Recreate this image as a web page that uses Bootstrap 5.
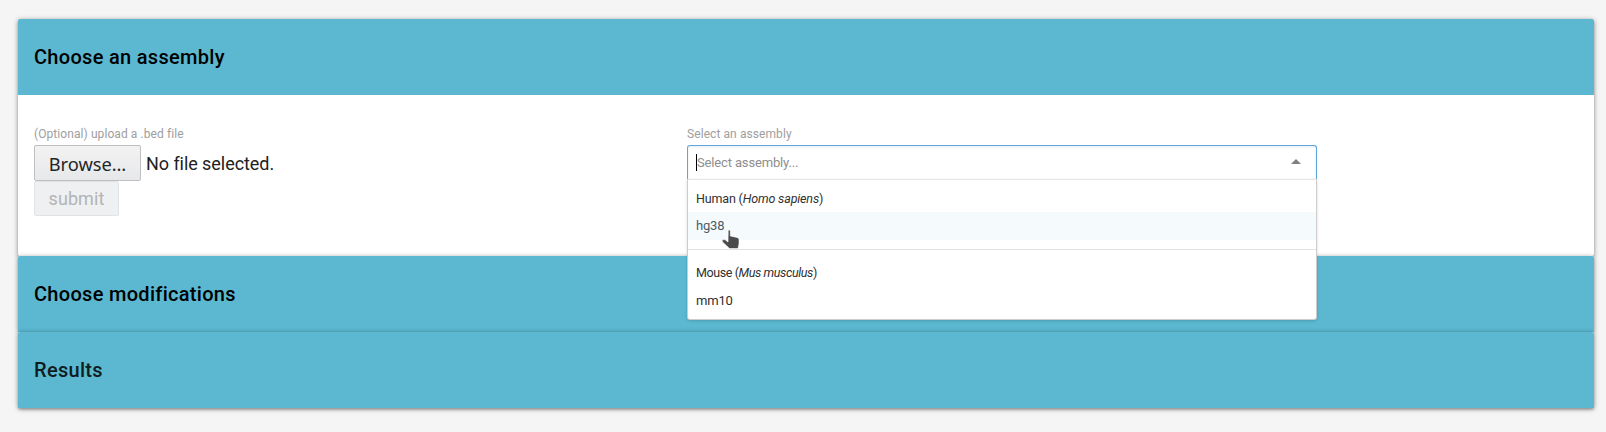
<!DOCTYPE html>
<html lang="en">
<head>
<meta charset="utf-8">
<title>Choose an assembly</title>
<link href="https://cdn.jsdelivr.net/npm/bootstrap@5.3.0/dist/css/bootstrap.min.css" rel="stylesheet">
<style>
body{background:#f5f5f5;font-family:Roboto,sans-serif;color:#212121;padding:19px 12px 24px 18px;min-height:432px}
.panel{background:#fff;border-radius:2px;box-shadow:0 1px 5px rgba(0,0,0,.42),0 2px 2px rgba(0,0,0,.14)}
.panel-title{height:76px;padding:0 16px;margin:0;background:#5bb8d0;color:#000;font-size:20px;font-weight:500;letter-spacing:.3px;line-height:32px;border-radius:2px 2px 0 0}
.panel-title.later{color:#101c20}
.panel-content{height:161px;padding:32px 16px 0}
.upload-col{width:653px}
.select-col{width:630px}
.hint{display:block;font-size:12px;line-height:15px;height:18px;color:#9e9e9e;letter-spacing:.08px}
.native{border:1px solid #bfbfc1;border-radius:2px;background:linear-gradient(#f2f2f2,#e7e8ea);color:#232627;font:18.3px/35px "Noto Sans",sans-serif;height:36px;width:107px;padding:0;text-align:center}
.native.send{width:85px;height:35px;line-height:33px;font-family:Roboto,sans-serif;font-size:18px;background:#eff0f2;border-color:#e2e3e5;color:#b2b4b5;letter-spacing:.1px}
.filename{font-size:18px;line-height:37px;height:36px;margin-left:5px;letter-spacing:-.06px}
.picker{height:35px;border:1px solid #5ba7dd;border-bottom:0;border-radius:3px 3px 0 0;box-shadow:inset 0 1px 3px rgba(0,0,0,.08);font-size:13px;color:#8e8e8e;padding:0 15px 0 8px;letter-spacing:-.15px}
.picker svg{margin-bottom:3px}
.caret{width:1px;height:17px;background:#000;margin-bottom:1px}
.options{position:absolute;top:100%;left:0;right:0;height:141px;background:#fff;border:1px solid #ccc;border-top-color:#e6e6e6;border-radius:0 0 3px 3px;box-shadow:0 1px 3px rgba(0,0,0,.15);font-size:13px;color:#303030;z-index:2;margin-top:-1px}
.options div{padding-left:8px;height:28px;line-height:28px;letter-spacing:-.2px}
.options .group-name{font-size:12.5px;height:32px;line-height:38px;letter-spacing:-.16px}
.options .active-option{background:#f5fafd;color:#495c68}
.options .second{margin-top:9px;border-top:1px solid #e3e3e3;height:38px;line-height:46px;letter-spacing:-.4px}
.pointer{position:absolute;left:33px;top:49px}
</style>
</head>
<body>
<main>
<section class="panel">
<h2 class="panel-title d-flex align-items-center">Choose an assembly</h2>
<div class="panel-content d-flex">
<div class="upload-col">
<label class="hint">(Optional) upload a .bed file</label>
<div class="d-flex"><button class="native">Browse…</button><span class="filename">No file selected.</span></div>
<button class="native send d-block" disabled>submit</button>
</div>
<div class="select-col">
<label class="hint">Select an assembly</label>
<div class="position-relative">
<div class="picker d-flex align-items-center"><span class="caret"></span><span class="flex-grow-1">Select assembly...</span><svg width="10" height="5"><path d="M5 0 10 5H0Z" fill="#808080"/></svg></div>
<div class="options">
<div class="group-name">Human (<i>Homo sapiens</i>)</div>
<div class="active-option">hg38</div>
<div class="group-name second">Mouse (<i>Mus musculus</i>)</div>
<div>mm10</div>
<svg class="pointer" width="20" height="21" viewBox="0 0 20 21"><path d="M7.2 1.5C7.7.6 9.1.8 9.3 2V7L16 8.4Q18 8.8 18 10.5V15L17 19.5H8.5L1.5 13Q.5 11.5 2 10.6L4.2 10.8 7 13Z" fill="#4b4b4b" stroke="#fff" stroke-width=".6"/></svg>
</div>
</div>
</div>
</div>
</section>
<section class="panel"><h2 class="panel-title d-flex align-items-center">Choose modifications</h2></section>
<section class="panel"><h2 class="panel-title later d-flex align-items-center">Results</h2></section>
</main>
<script src="https://cdn.jsdelivr.net/npm/bootstrap@5.3.0/dist/js/bootstrap.bundle.min.js"></script>
</body>
</html>
